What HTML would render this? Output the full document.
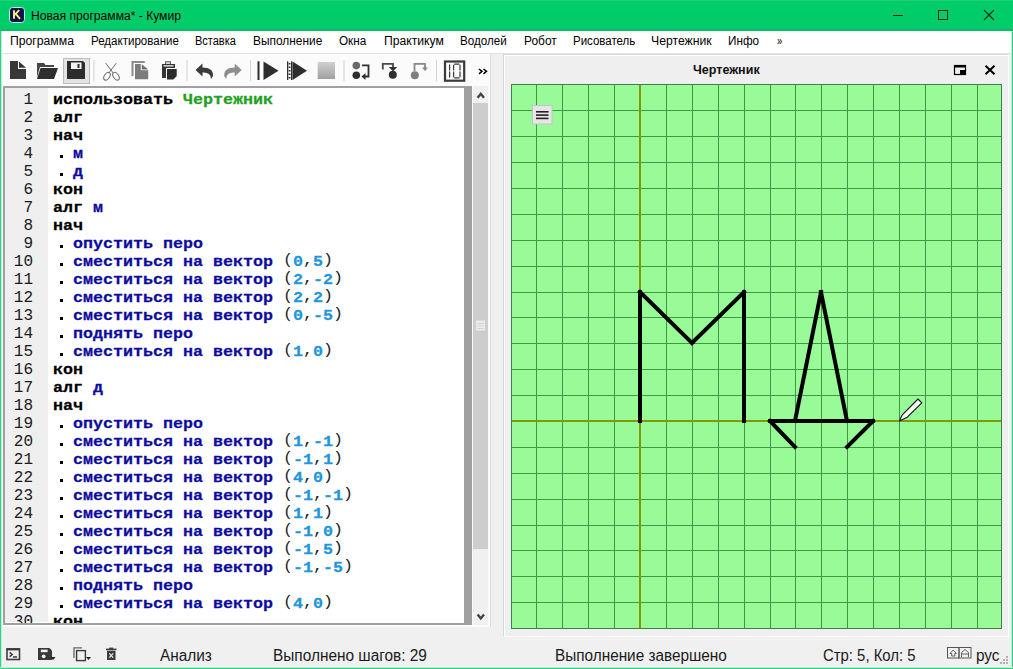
<!DOCTYPE html>
<html><head><meta charset="utf-8">
<style>
*{margin:0;padding:0;box-sizing:border-box}
html,body{width:1013px;height:669px;overflow:hidden;background:#f0f0f0;font-family:"Liberation Sans",sans-serif;position:relative}
.abs{position:absolute}
.t{position:absolute;white-space:nowrap;transform-origin:0 0}
#title{left:0;top:0;width:1013px;height:30px;background:#00cc6a}
#bl{left:0;top:30px;width:2px;height:639px;background:linear-gradient(90deg,#2fd386 0 1px,#bdeed3 1px 2px)}
#br{left:1011px;top:30px;width:2px;height:639px;background:linear-gradient(90deg,#bdeed3 0 1px,#2fd386 1px 2px)}
#bb{left:0;top:667px;width:1013px;height:2px;background:linear-gradient(180deg,#bdeed3 0 1px,#2fd386 1px 2px)}
#menu{left:2px;top:31px;width:1009px;height:22px;background:#fff}
#menuline{left:2px;top:53px;width:1009px;height:1px;background:#e3e3e3}
#tb{left:2px;top:54px;width:488px;height:573px;background:#fbfbfb}
#ed{left:3px;top:86px;width:469px;height:539px;background:#a0a0a0}
#edin{left:5px;top:88px;width:459px;height:535px;background:#fff;overflow:hidden}
#gut{left:0;top:0;width:43px;height:534px;background:#efefef}
.ln{position:absolute;left:0;width:28px;margin-top:3px;text-align:right;font-size:16px;line-height:18px;color:#1a1a1a;font-family:"Liberation Mono",monospace}
.cl{position:absolute;left:48px;margin-top:3px;transform:scaleY(0.88);transform-origin:0 13.44px;line-height:18px;font-family:"Liberation Mono",monospace;font-weight:bold;font-size:16.67px;white-space:pre;color:#000;-webkit-text-stroke:0.3px currentColor}
.dot{position:absolute;left:55px;width:3px;height:3px;background:#000}
.b{color:#0c0ca0}.g{color:#22a022}.n{color:#2196dc}.p{font-weight:normal;position:relative;top:-2px;color:#222;-webkit-text-stroke:0}
#sb{left:473px;top:86px;width:15px;height:539px;background:#f0f0f0}
#thumb{left:473px;top:103px;width:15px;height:446px;background:#cdcdcd}
#panel{left:503px;top:54px;width:506px;height:583px;background:#efefef;border:1px solid #d8d8d8;border-right-color:#fff;border-bottom-color:#fff;box-shadow:inset 1px 1px 0 #fff}
#status{left:2px;top:637px;width:1009px;height:30px;background:#f0f0f0}
svg{position:absolute;left:0;top:0}
</style></head><body>
<div id="title" class="abs"></div>
<div id="bl" class="abs"></div><div id="br" class="abs"></div><div id="bb" class="abs"></div>
<div id="menu" class="abs"></div><div class="abs" style="left:0;top:29px;width:1013px;height:2px;background:#0cbc66"></div><div class="abs" style="left:0;top:0;width:1013px;height:1px;background:#22d27a"></div>
<div id="menuline" class="abs"></div>
<div id="tb" class="abs"></div><div class="abs" style="left:490px;top:54px;width:1px;height:573px;background:#dddddd"></div>
<div id="ed" class="abs"></div>
<div id="edin" class="abs"><div id="gut" class="abs"></div>
<div class="ln" style="top:0px">1</div>
<div class="cl" style="top:0px">использовать <span class="g">Чертежник</span></div>
<div class="ln" style="top:18px">2</div>
<div class="cl" style="top:18px">алг</div>
<div class="ln" style="top:36px">3</div>
<div class="cl" style="top:36px">нач</div>
<div class="ln" style="top:54px">4</div>
<div class="dot" style="top:67px"></div>
<div class="cl" style="top:54px">  <span class="b">м</span></div>
<div class="ln" style="top:72px">5</div>
<div class="dot" style="top:85px"></div>
<div class="cl" style="top:72px">  <span class="b">д</span></div>
<div class="ln" style="top:90px">6</div>
<div class="cl" style="top:90px">кон</div>
<div class="ln" style="top:108px">7</div>
<div class="cl" style="top:108px">алг <span class="b">м</span></div>
<div class="ln" style="top:126px">8</div>
<div class="cl" style="top:126px">нач</div>
<div class="ln" style="top:144px">9</div>
<div class="dot" style="top:157px"></div>
<div class="cl" style="top:144px">  <span class="b">опустить перо</span></div>
<div class="ln" style="top:162px">10</div>
<div class="dot" style="top:175px"></div>
<div class="cl" style="top:162px">  <span class="b">сместиться на вектор</span> <span class="p">(</span><span class="n">0</span><span class="p">,</span><span class="n">5</span><span class="p">)</span></div>
<div class="ln" style="top:180px">11</div>
<div class="dot" style="top:193px"></div>
<div class="cl" style="top:180px">  <span class="b">сместиться на вектор</span> <span class="p">(</span><span class="n">2</span><span class="p">,</span><span class="n">-2</span><span class="p">)</span></div>
<div class="ln" style="top:198px">12</div>
<div class="dot" style="top:211px"></div>
<div class="cl" style="top:198px">  <span class="b">сместиться на вектор</span> <span class="p">(</span><span class="n">2</span><span class="p">,</span><span class="n">2</span><span class="p">)</span></div>
<div class="ln" style="top:216px">13</div>
<div class="dot" style="top:229px"></div>
<div class="cl" style="top:216px">  <span class="b">сместиться на вектор</span> <span class="p">(</span><span class="n">0</span><span class="p">,</span><span class="n">-5</span><span class="p">)</span></div>
<div class="ln" style="top:234px">14</div>
<div class="dot" style="top:247px"></div>
<div class="cl" style="top:234px">  <span class="b">поднять перо</span></div>
<div class="ln" style="top:252px">15</div>
<div class="dot" style="top:265px"></div>
<div class="cl" style="top:252px">  <span class="b">сместиться на вектор</span> <span class="p">(</span><span class="n">1</span><span class="p">,</span><span class="n">0</span><span class="p">)</span></div>
<div class="ln" style="top:270px">16</div>
<div class="cl" style="top:270px">кон</div>
<div class="ln" style="top:288px">17</div>
<div class="cl" style="top:288px">алг <span class="b">д</span></div>
<div class="ln" style="top:306px">18</div>
<div class="cl" style="top:306px">нач</div>
<div class="ln" style="top:324px">19</div>
<div class="dot" style="top:337px"></div>
<div class="cl" style="top:324px">  <span class="b">опустить перо</span></div>
<div class="ln" style="top:342px">20</div>
<div class="dot" style="top:355px"></div>
<div class="cl" style="top:342px">  <span class="b">сместиться на вектор</span> <span class="p">(</span><span class="n">1</span><span class="p">,</span><span class="n">-1</span><span class="p">)</span></div>
<div class="ln" style="top:360px">21</div>
<div class="dot" style="top:373px"></div>
<div class="cl" style="top:360px">  <span class="b">сместиться на вектор</span> <span class="p">(</span><span class="n">-1</span><span class="p">,</span><span class="n">1</span><span class="p">)</span></div>
<div class="ln" style="top:378px">22</div>
<div class="dot" style="top:391px"></div>
<div class="cl" style="top:378px">  <span class="b">сместиться на вектор</span> <span class="p">(</span><span class="n">4</span><span class="p">,</span><span class="n">0</span><span class="p">)</span></div>
<div class="ln" style="top:396px">23</div>
<div class="dot" style="top:409px"></div>
<div class="cl" style="top:396px">  <span class="b">сместиться на вектор</span> <span class="p">(</span><span class="n">-1</span><span class="p">,</span><span class="n">-1</span><span class="p">)</span></div>
<div class="ln" style="top:414px">24</div>
<div class="dot" style="top:427px"></div>
<div class="cl" style="top:414px">  <span class="b">сместиться на вектор</span> <span class="p">(</span><span class="n">1</span><span class="p">,</span><span class="n">1</span><span class="p">)</span></div>
<div class="ln" style="top:432px">25</div>
<div class="dot" style="top:445px"></div>
<div class="cl" style="top:432px">  <span class="b">сместиться на вектор</span> <span class="p">(</span><span class="n">-1</span><span class="p">,</span><span class="n">0</span><span class="p">)</span></div>
<div class="ln" style="top:450px">26</div>
<div class="dot" style="top:463px"></div>
<div class="cl" style="top:450px">  <span class="b">сместиться на вектор</span> <span class="p">(</span><span class="n">-1</span><span class="p">,</span><span class="n">5</span><span class="p">)</span></div>
<div class="ln" style="top:468px">27</div>
<div class="dot" style="top:481px"></div>
<div class="cl" style="top:468px">  <span class="b">сместиться на вектор</span> <span class="p">(</span><span class="n">-1</span><span class="p">,</span><span class="n">-5</span><span class="p">)</span></div>
<div class="ln" style="top:486px">28</div>
<div class="dot" style="top:499px"></div>
<div class="cl" style="top:486px">  <span class="b">поднять перо</span></div>
<div class="ln" style="top:504px">29</div>
<div class="dot" style="top:517px"></div>
<div class="cl" style="top:504px">  <span class="b">сместиться на вектор</span> <span class="p">(</span><span class="n">4</span><span class="p">,</span><span class="n">0</span><span class="p">)</span></div>
<div class="ln" style="top:522px">30</div>
<div class="cl" style="top:522px">кон</div>
</div>
<div id="sb" class="abs"></div>
<div id="thumb" class="abs"></div>
<div id="panel" class="abs"></div>
<div class="t" style="left:30.90px;top:10.32px;font-size:12.50px;line-height:12.50px;font-weight:normal;color:#000;transform:scaleX(0.9683);">Новая программа* - Кумир</div>
<div class="t" style="left:9.50px;top:35.42px;font-size:12.50px;line-height:12.50px;font-weight:normal;color:#000;transform:scaleX(0.9762);">Программа</div><div class="t" style="left:90.70px;top:35.42px;font-size:12.50px;line-height:12.50px;font-weight:normal;color:#000;transform:scaleX(0.9239);">Редактирование</div><div class="t" style="left:195.40px;top:35.42px;font-size:12.50px;line-height:12.50px;font-weight:normal;color:#000;transform:scaleX(0.8796);">Вставка</div><div class="t" style="left:253.40px;top:35.42px;font-size:12.50px;line-height:12.50px;font-weight:normal;color:#000;transform:scaleX(0.9526);">Выполнение</div><div class="t" style="left:339.30px;top:35.42px;font-size:12.50px;line-height:12.50px;font-weight:normal;color:#000;transform:scaleX(0.9373);">Окна</div><div class="t" style="left:383.70px;top:35.42px;font-size:12.50px;line-height:12.50px;font-weight:normal;color:#000;transform:scaleX(0.9724);">Практикум</div><div class="t" style="left:460.40px;top:35.42px;font-size:12.50px;line-height:12.50px;font-weight:normal;color:#000;transform:scaleX(0.9285);">Водолей</div><div class="t" style="left:523.60px;top:35.42px;font-size:12.50px;line-height:12.50px;font-weight:normal;color:#000;transform:scaleX(0.9559);">Робот</div><div class="t" style="left:572.70px;top:35.42px;font-size:12.50px;line-height:12.50px;font-weight:normal;color:#000;transform:scaleX(0.9181);">Рисователь</div><div class="t" style="left:651.10px;top:35.42px;font-size:12.50px;line-height:12.50px;font-weight:normal;color:#000;transform:scaleX(0.9777);">Чертежник</div><div class="t" style="left:728.20px;top:35.42px;font-size:12.50px;line-height:12.50px;font-weight:normal;color:#000;transform:scaleX(0.9389);">Инфо</div><div class="t" style="left:776.50px;top:34.92px;font-size:12.50px;line-height:12.50px;font-weight:normal;color:#000;transform:scaleX(0.7495);">»</div>
<div class="t" style="left:693.30px;top:64.22px;font-size:12.50px;line-height:12.50px;font-weight:bold;color:#111;transform:scaleX(1.0030);">Чертежник</div>
<div class="t" style="left:160.10px;top:647.66px;font-size:16.00px;line-height:16.00px;font-weight:normal;color:#1a1a1a;transform:scaleX(0.9611);">Анализ</div><div class="t" style="left:272.70px;top:647.66px;font-size:16.00px;line-height:16.00px;font-weight:normal;color:#1a1a1a;transform:scaleX(0.9624);">Выполнено шагов: 29</div><div class="t" style="left:555.00px;top:647.66px;font-size:16.00px;line-height:16.00px;font-weight:normal;color:#1a1a1a;transform:scaleX(0.9579);">Выполнение завершено</div><div class="t" style="left:823.10px;top:647.66px;font-size:16.00px;line-height:16.00px;font-weight:normal;color:#1a1a1a;transform:scaleX(0.9302);">Стр: 5, Кол: 5</div><div class="t" style="left:976.20px;top:647.66px;font-size:16.00px;line-height:16.00px;font-weight:normal;color:#1a1a1a;transform:scaleX(0.9568);">рус</div>
<svg width="1013" height="669" viewBox="0 0 1013 669">
<rect x="511" y="84" width="491" height="545" fill="#98fb98"/>
<rect x="536" y="84" width="1" height="545" fill="#409846"/>
<rect x="562" y="84" width="1" height="545" fill="#409846"/>
<rect x="588" y="84" width="1" height="545" fill="#409846"/>
<rect x="614" y="84" width="1" height="545" fill="#409846"/>
<rect x="666" y="84" width="1" height="545" fill="#409846"/>
<rect x="692" y="84" width="1" height="545" fill="#409846"/>
<rect x="718" y="84" width="1" height="545" fill="#409846"/>
<rect x="744" y="84" width="1" height="545" fill="#409846"/>
<rect x="770" y="84" width="1" height="545" fill="#409846"/>
<rect x="795" y="84" width="1" height="545" fill="#409846"/>
<rect x="821" y="84" width="1" height="545" fill="#409846"/>
<rect x="847" y="84" width="1" height="545" fill="#409846"/>
<rect x="873" y="84" width="1" height="545" fill="#409846"/>
<rect x="899" y="84" width="1" height="545" fill="#409846"/>
<rect x="925" y="84" width="1" height="545" fill="#409846"/>
<rect x="951" y="84" width="1" height="545" fill="#409846"/>
<rect x="977" y="84" width="1" height="545" fill="#409846"/>
<rect x="511" y="602" width="491" height="1" fill="#409846"/>
<rect x="511" y="576" width="491" height="1" fill="#409846"/>
<rect x="511" y="550" width="491" height="1" fill="#409846"/>
<rect x="511" y="525" width="491" height="1" fill="#409846"/>
<rect x="511" y="499" width="491" height="1" fill="#409846"/>
<rect x="511" y="473" width="491" height="1" fill="#409846"/>
<rect x="511" y="447" width="491" height="1" fill="#409846"/>
<rect x="511" y="395" width="491" height="1" fill="#409846"/>
<rect x="511" y="369" width="491" height="1" fill="#409846"/>
<rect x="511" y="343" width="491" height="1" fill="#409846"/>
<rect x="511" y="317" width="491" height="1" fill="#409846"/>
<rect x="511" y="292" width="491" height="1" fill="#409846"/>
<rect x="511" y="266" width="491" height="1" fill="#409846"/>
<rect x="511" y="240" width="491" height="1" fill="#409846"/>
<rect x="511" y="214" width="491" height="1" fill="#409846"/>
<rect x="511" y="188" width="491" height="1" fill="#409846"/>
<rect x="511" y="162" width="491" height="1" fill="#409846"/>
<rect x="511" y="136" width="491" height="1" fill="#409846"/>
<rect x="511" y="110" width="491" height="1" fill="#409846"/>
<rect x="511.5" y="84.5" width="490" height="544" fill="none" stroke="#3f7f4c" stroke-width="1"/>
<rect x="639" y="85" width="2" height="543" fill="#7e9a08"/>
<rect x="512" y="420" width="489" height="2" fill="#7e9a08"/>
<line x1="640" y1="421" x2="640" y2="292" stroke="#000" stroke-width="4" stroke-linecap="square"/>
<line x1="640" y1="292" x2="692" y2="343" stroke="#000" stroke-width="4" stroke-linecap="square"/>
<line x1="692" y1="343" x2="744" y2="292" stroke="#000" stroke-width="4" stroke-linecap="square"/>
<line x1="744" y1="292" x2="744" y2="421" stroke="#000" stroke-width="4" stroke-linecap="square"/>
<line x1="770" y1="421" x2="795" y2="447" stroke="#000" stroke-width="4" stroke-linecap="square"/>
<line x1="770" y1="421" x2="873" y2="421" stroke="#000" stroke-width="4" stroke-linecap="square"/>
<line x1="873" y1="421" x2="847" y2="447" stroke="#000" stroke-width="4" stroke-linecap="square"/>
<line x1="847" y1="421" x2="821" y2="292" stroke="#000" stroke-width="4" stroke-linecap="square"/>
<line x1="821" y1="292" x2="795" y2="421" stroke="#000" stroke-width="4" stroke-linecap="square"/>
<!-- app icon -->
<rect x="9.5" y="7.5" width="15" height="15" rx="3" fill="#12124a" stroke="#b8f4e4" stroke-width="1"/>
<path d="M14 10.2 V18.8 M14.3 15.2 L19.2 10.2 M15.8 13.8 L20 18.8" stroke="#f6f07a" stroke-width="1.9" fill="none"/>
<!-- title buttons -->
<rect x="893" y="15" width="10" height="1" fill="#0a2a16"/>
<rect x="938.5" y="10.5" width="9" height="9" fill="none" stroke="#0a2a16" stroke-width="1"/>
<path d="M984 10 L994 20 M994 10 L984 20" stroke="#0a2a16" stroke-width="1.1"/>
<!-- toolbar: save pressed bg -->
<rect x="63.5" y="58.5" width="26" height="25" fill="#e3e3e3" stroke="#bcbcbc" stroke-width="1"/>
<defs>
<linearGradient id="gd" x1="0" y1="0" x2="1" y2="0"><stop offset="0" stop-color="#3a3a3a"/><stop offset="1" stop-color="#2a2a2a"/></linearGradient>
<linearGradient id="gs" x1="0" y1="0" x2="0" y2="1"><stop offset="0" stop-color="#d0d0d0"/><stop offset="1" stop-color="#a0a0a0"/></linearGradient>
</defs>
<!-- new -->
<path d="M10 61 H18 V69 H26 V79 H10 Z" fill="#383838"/>
<path d="M19 61.5 L26 67.8 H19 Z" fill="#353535"/>
<!-- open -->
<path d="M37 63 H44 L45.5 65 H54 V67 H40 L37 77 Z" fill="#454545"/>
<path d="M40.5 68 H58 L54 79 H37 Z" fill="#2e2e2e"/>
<!-- save -->
<path d="M67 61 H83 L85 63 V79 H67 Z" fill="#2c2c2c"/>
<rect x="71" y="62.5" width="10.5" height="6.5" fill="#f2f2f2"/>
<rect x="77.5" y="64" width="2" height="4" fill="#2c2c2c"/>
<!-- separators -->
<rect x="93.5" y="60" width="1" height="21" fill="#d2d2d2"/>
<rect x="186.5" y="60" width="1" height="21" fill="#d2d2d2"/>
<rect x="250" y="60" width="1" height="21" fill="#d2d2d2"/>
<rect x="343.5" y="60" width="1" height="21" fill="#d2d2d2"/>
<rect x="436" y="60" width="1" height="21" fill="#d2d2d2"/>
<!-- scissors -->
<g stroke="#6e6e6e" stroke-width="1" fill="none">
<path d="M105.6 63 L113.4 73.2 M116.4 63 L108.6 73.2"/>
<ellipse cx="107" cy="76.2" rx="4.3" ry="2.6" transform="rotate(-55 107 76.2)"/>
<ellipse cx="116" cy="76.2" rx="4.3" ry="2.6" transform="rotate(55 116 76.2)"/>
</g>
<!-- copy -->
<path d="M132.5 76 V62 H144.8" stroke="#8a8a8a" stroke-width="2" fill="none"/>
<path d="M135 64 H140.8 V70.2 H148.2 V79.2 H135 Z" fill="#7c7c7c"/>
<path d="M141.8 64.2 L148.2 69.4 H141.8 Z" fill="#6e6e6e"/>
<!-- paste -->
<rect x="165.5" y="61.8" width="5" height="2.6" fill="#e8e8e8" stroke="#555" stroke-width="1"/>
<rect x="162" y="64" width="13" height="14" fill="#353535"/>
<rect x="163.5" y="65.2" width="10" height="1.3" fill="#f2f2f2"/>
<path d="M166.5 68.5 H177.2 V76.6 L173.8 80 H166.5 Z" fill="#2b2b2b" stroke="#fbfbfb" stroke-width="1"/>
<path d="M173.6 80.2 L177.4 76.4" stroke="#fbfbfb" stroke-width="1.2"/>
<!-- undo -->
<path d="M195.5 70 L202.5 63.5 V67.5 Q213.5 67.5 213 76 L211 79 Q211 72 202.5 72.5 V76.5 Z" fill="#3c3c3c"/>
<!-- redo -->
<path d="M241.7 70 L234.7 63.5 V67.5 Q223.7 67.5 224.2 76 L226.2 79 Q226.2 72 234.7 72.5 V76.5 Z" fill="#8e8e8e"/>
<!-- run -->
<rect x="257.5" y="61.3" width="2" height="18.7" fill="#2e2e2e"/>
<path d="M263.5 61.5 L278.5 70.8 L263.5 80 Z" fill="#2e2e2e"/>
<!-- step run -->
<rect x="287" y="61.3" width="1.3" height="18.7" fill="#303030"/>
<rect x="291" y="61.3" width="1.3" height="18.7" fill="#303030"/>
<g fill="#303030"><rect x="288.7" y="63" width="1.8" height="1.5"/><rect x="288.7" y="66.5" width="1.8" height="1.5"/><rect x="288.7" y="70" width="1.8" height="1.5"/><rect x="288.7" y="73.5" width="1.8" height="1.5"/><rect x="288.7" y="77" width="1.8" height="1.5"/></g>
<path d="M292.5 61.5 L307 70.8 L292.5 80 Z" fill="#2e2e2e"/>
<!-- stop -->
<rect x="317.7" y="62" width="17.3" height="17" fill="url(#gs)"/>
<!-- step over -->
<circle cx="356.3" cy="65.6" r="3.8" fill="#6a6a6a"/>
<circle cx="356.3" cy="75.3" r="3.8" fill="#2e2e2e"/>
<path d="M362 65.3 H368.5 V76.5 H365" stroke="#2e2e2e" stroke-width="1.8" fill="none"/>
<path d="M361.5 76.5 L365.5 73 V80 Z" fill="#2e2e2e"/>
<!-- step in -->
<path d="M382.8 69.5 V63.8 H393 V68" stroke="#4a4a4a" stroke-width="1.8" fill="none"/>
<path d="M388.8 67 H397.2 L393 71.5 Z" fill="#333"/>
<circle cx="392.8" cy="74.8" r="4" fill="#2e2e2e"/>
<!-- step out -->
<circle cx="414.8" cy="75.2" r="4" fill="#7e7e7e"/>
<path d="M414.5 71 V63.8 H425 V68" stroke="#888" stroke-width="1.8" fill="none"/>
<path d="M422 67.5 H428 L425 71 Z" fill="#888"/>
<!-- 10 box -->
<rect x="445" y="61.5" width="19.2" height="19.2" fill="none" stroke="#3a3a3a" stroke-width="2.2"/>
<g stroke="#3a3a3a" stroke-width="1.2" fill="none" stroke-linecap="butt">
<path d="M449.6 64.5 V70.4 M449.6 71.6 V77.6"/>
<path d="M454.2 64.2 H459.4 M453.6 64.8 V70.4 M453.6 71.6 V77.2 M454.2 77.8 H459.4 M460 64.8 V70.4 M460 71.6 V77.2"/>
</g>
<!-- chevrons -->
<path d="M479 69 L482 71.3 L479 73.8 M483.5 69 L486.5 71.3 L483.5 73.8" stroke="#000" stroke-width="1.5" fill="none"/>
<!-- scrollbar arrows -->
<path d="M477.6 97.8 L480.8 93.8 L484 97.8" stroke="#444" stroke-width="2.4" fill="none" stroke-linejoin="miter"/>
<path d="M477.6 614.4 L480.8 618.4 L484 614.4" stroke="#444" stroke-width="2.4" fill="none" stroke-linejoin="miter"/>
<rect x="476" y="320.5" width="9" height="10" fill="#ececec"/>
<rect x="477" y="323" width="7" height="0.8" fill="#cfcfcf"/><rect x="477" y="325.5" width="7" height="0.8" fill="#cfcfcf"/><rect x="477" y="328" width="7" height="0.8" fill="#cfcfcf"/>
<!-- panel header buttons -->
<rect x="954.5" y="65.5" width="11" height="9" fill="none" stroke="#000" stroke-width="1.2"/>
<rect x="960" y="70" width="5.5" height="4.5" fill="#000"/>
<rect x="955" y="66" width="10" height="1.5" fill="#000"/>
<path d="M985.5 65.8 L994.5 74.2 M994.5 65.8 L985.5 74.2" stroke="#000" stroke-width="2"/>
<!-- canvas menu button -->
<rect x="532.5" y="105.5" width="19.5" height="18.5" fill="#e6e6e6" stroke="#c4c4c4" stroke-width="1"/>
<rect x="536" y="111" width="12.5" height="1.6" fill="#222"/>
<rect x="536" y="114.3" width="12.5" height="1.6" fill="#222"/>
<rect x="536" y="117.6" width="12.5" height="1.6" fill="#222"/>
<!-- pencil -->
<path d="M899.5 421 L901.6 416 L902.8 414.3 L918 399 L921.8 402.8 L906.8 417.6 L902.6 419.4 Z" fill="#f8f8f8" stroke="#111" stroke-width="1.1" stroke-linejoin="round"/>
<!-- status icons -->
<rect x="7" y="649" width="12.5" height="10.5" fill="none" stroke="#3c3c3c" stroke-width="1.6"/>
<rect x="6.5" y="648.2" width="13.5" height="2.2" fill="#3c3c3c"/>
<path d="M9.6 652.4 L12.2 654.5 L9.6 656.6" stroke="#3c3c3c" stroke-width="1.5" fill="none"/>
<rect x="13" y="656.2" width="4" height="1.5" fill="#3c3c3c"/>
<path d="M38 648 H49.5 L52 650.5 V660 H38 Z" fill="#383838"/>
<rect x="40.8" y="649.6" width="6.8" height="2.6" fill="#f0f0f0"/>
<circle cx="43.7" cy="656.3" r="1.9" fill="#f0f0f0"/>
<path d="M50.5 657 H55.5 L53 660 Z" fill="#222"/>
<path d="M74 658 V647.8 H82" stroke="#666" stroke-width="1.3" fill="none"/>
<rect x="76.6" y="650.6" width="8.8" height="10" fill="#f0f0f0" stroke="#3a3a3a" stroke-width="1.4"/>
<path d="M86 657 H91 L88.5 660 Z" fill="#222"/>
<rect x="106" y="648.6" width="10.5" height="1.6" fill="#3c3c3c"/>
<rect x="109.2" y="647.6" width="4" height="1.4" fill="#3c3c3c"/>
<rect x="107" y="650.8" width="8.5" height="9.2" fill="#3c3c3c"/>
<path d="M109.3 653.3 L113.2 657.6 M113.2 653.3 L109.3 657.6" stroke="#f0f0f0" stroke-width="1.2"/>
<!-- status keyboard icons -->
<rect x="947.5" y="647.5" width="11.5" height="10.5" fill="none" stroke="#555" stroke-width="1"/>
<rect x="959" y="647.5" width="12" height="10.5" fill="none" stroke="#555" stroke-width="1"/>
<path d="M950 653.5 L953.2 650 L956.5 653.5 H954.8 V656 H951.7 V653.5 Z" fill="none" stroke="#555" stroke-width="0.9"/>
<path d="M961.5 657 V652.5 L965 649.5 L968.5 652.5 V657 M961.5 654 H968.5" fill="none" stroke="#555" stroke-width="0.9"/>
<!-- size grip -->
<g fill="#b0b0b0"><rect x="1006" y="656" width="2" height="2"/><rect x="1003" y="659" width="2" height="2"/><rect x="1006" y="659" width="2" height="2"/><rect x="1000" y="662" width="2" height="2"/><rect x="1003" y="662" width="2" height="2"/><rect x="1006" y="662" width="2" height="2"/></g>

</svg>
</body></html>
